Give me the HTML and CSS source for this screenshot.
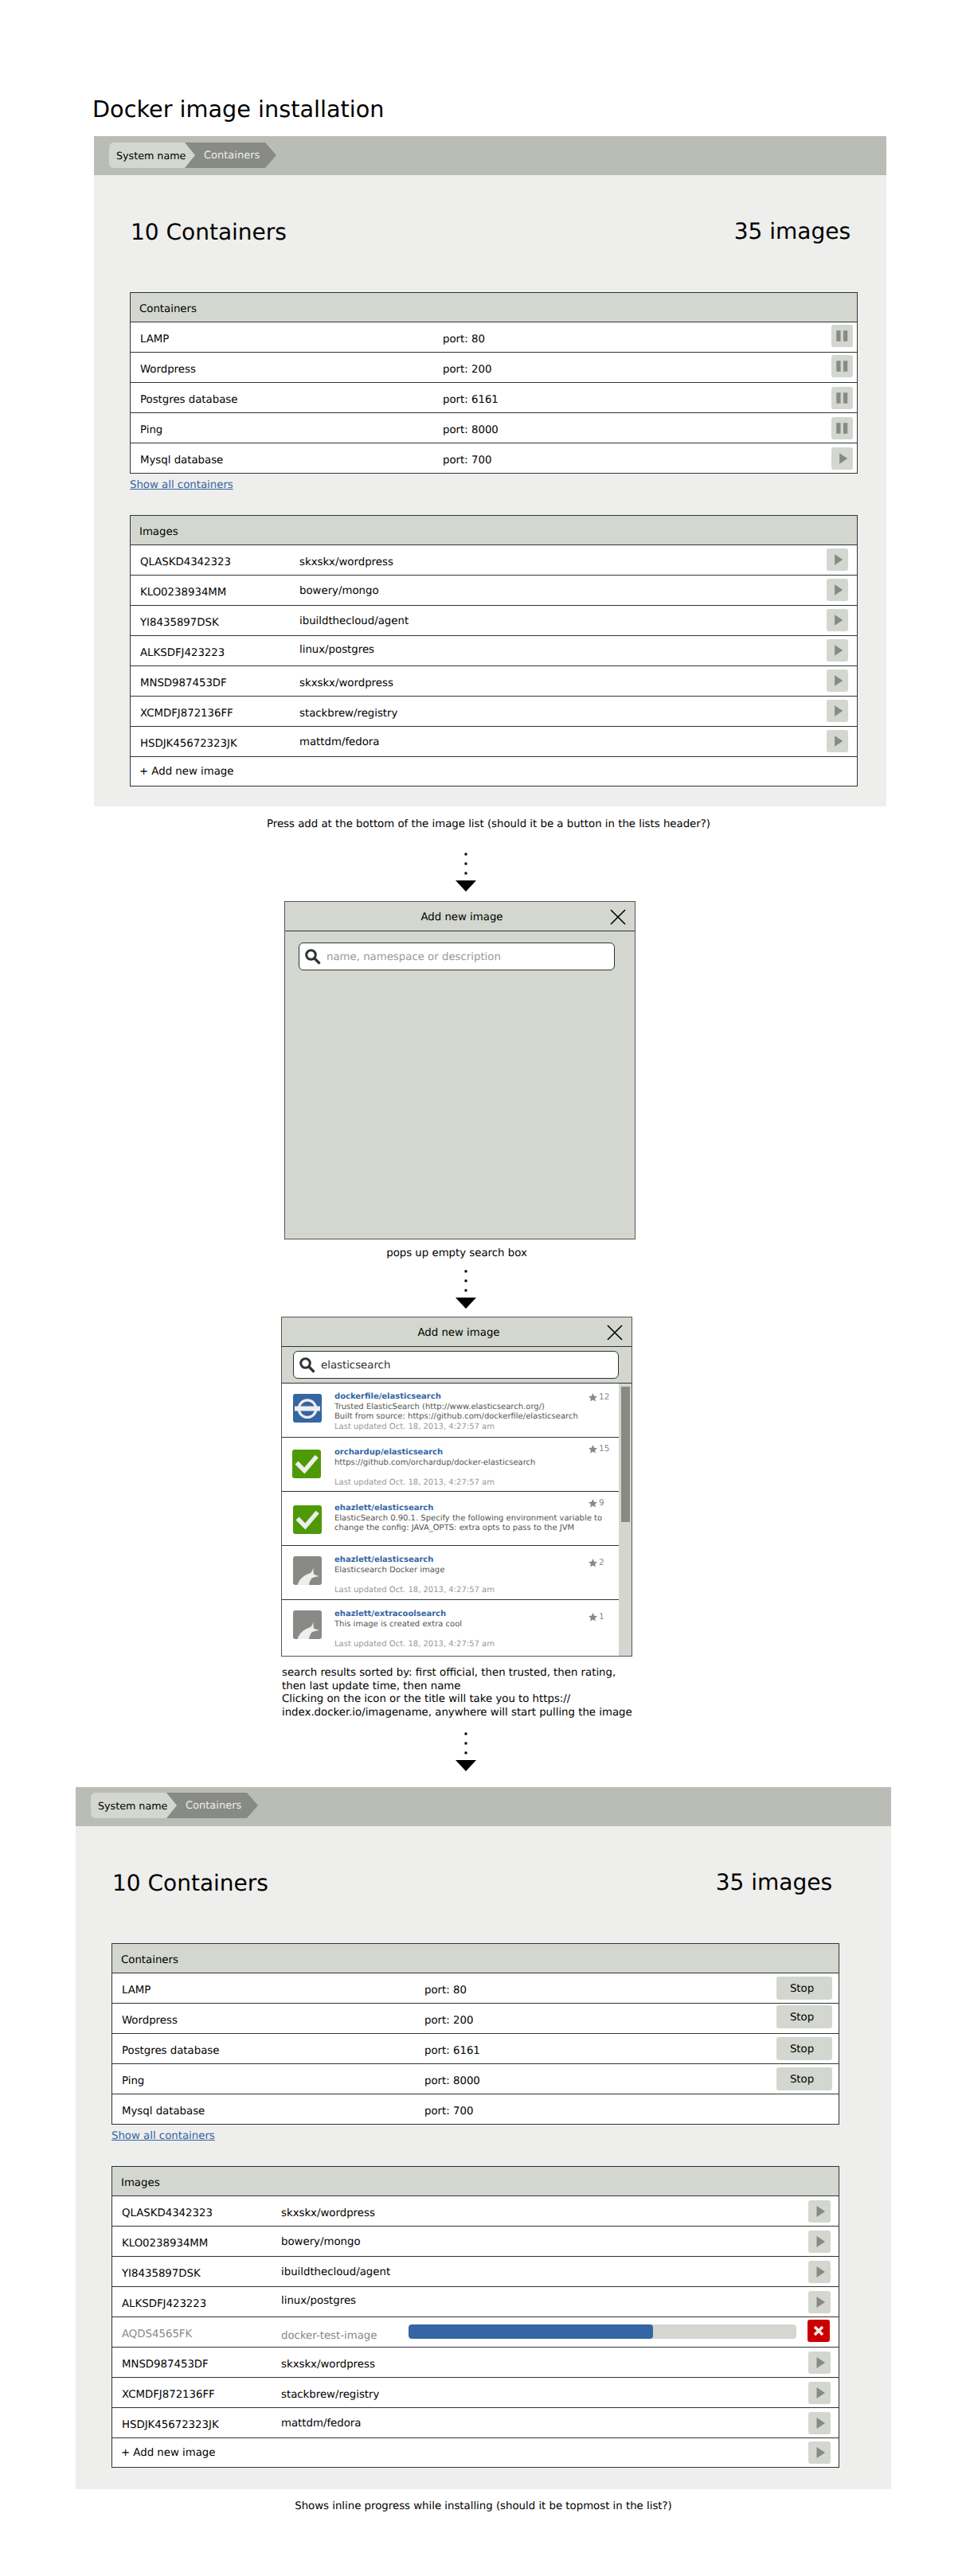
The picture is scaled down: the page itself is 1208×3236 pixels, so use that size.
FILE: index.html
```html
<!DOCTYPE html>
<html lang="en">
<head>
<meta charset="utf-8">
<title>Docker image installation</title>
<link rel="stylesheet" href="styles.css">
</head>
<body>
<svg class="defs" width="0" height="0" aria-hidden="true">
  <defs>
    <symbol id="flow-arrow" viewBox="0 0 28 50">
      <rect x="12.5" y="1.5" width="3" height="3" fill="#000"/>
      <rect x="12.5" y="13.5" width="3" height="3" fill="#000"/>
      <rect x="12.5" y="25.5" width="3" height="3" fill="#000"/>
      <path d="M1 36H27L14 50Z" fill="#000"/>
    </symbol>
    <symbol id="i-play" viewBox="0 0 28 28"><path d="M10.5 7V21L21 14Z" fill="#888a85"/></symbol>
    <symbol id="i-pause" viewBox="0 0 28 28"><rect x="6.5" y="7" width="5.5" height="14" fill="#888a85"/><rect x="15.5" y="7" width="5.5" height="14" fill="#888a85"/></symbol>
    <symbol id="i-close" viewBox="0 0 20 20"><path d="M1 1L19 19M19 1L1 19" stroke="#000" stroke-width="1.6" fill="none"/></symbol>
    <symbol id="i-search" viewBox="0 0 20 20"><circle cx="7.5" cy="7.5" r="5.8" stroke="#2e3436" stroke-width="3" fill="none"/><path d="M11.5 11.5L18.5 18.5" stroke="#2e3436" stroke-width="3.2" fill="none"/></symbol>
    <symbol id="i-star" viewBox="0 0 24 24"><path d="M12 0l3.6 8 8.4.9-6.3 5.7 1.8 8.4L12 18.7 4.5 23l1.8-8.4L0 8.9 8.4 8z" fill="#888a85"/></symbol>
    <symbol id="i-official" viewBox="0 0 36 36"><rect width="36" height="36" rx="3" fill="#3465a4"/><circle cx="18" cy="18.7" r="10.8" stroke="#eeeeec" stroke-width="3.2" fill="none"/><rect x="2" y="15.5" width="32" height="6" fill="#eeeeec"/></symbol>
    <symbol id="i-trusted" viewBox="0 0 36 36"><rect width="36" height="36" rx="3" fill="#4e9a06"/><path d="M5.5 16.5L15.3 26.5L30.7 8.5" stroke="#eeeeec" stroke-width="5.5" fill="none"/></symbol>
    <symbol id="i-whale" viewBox="0 0 36 36"><rect width="36" height="36" rx="3" fill="#888a85"/><path d="M5.5 36C8 28 15 23 22 21C24 19 25 16 25.5 14.5C25.5 18 25.5 21 26 22.5C28 23.5 31 24.5 33 25C29 25.5 26 26.5 23.5 27.5C21.5 30 20.5 33 20 36Z" fill="#eeeeec"/></symbol>
  </defs>
</svg>

<h1 class="page-title">Docker image installation</h1>

<section class="panel panel-a">
  <div class="bar">
    <div class="crumbs"><span class="crumb crumb-root">System name</span><span class="crumb crumb-leaf">Containers</span></div>
  </div>
  <div class="content">
    <div class="stats"><span>10 Containers</span><span class="stats-right">35 images</span></div>
    <div class="table">
      <div class="table-head">Containers</div>
      <div class="row row-port"><span class="cell">LAMP</span><span class="cell">port: 80</span><span class="btn btn-icon btn-pc"><svg class="btn-glyph"><use href="#i-pause"/></svg></span></div>
      <div class="row row-port"><span class="cell">Wordpress</span><span class="cell">port: 200</span><span class="btn btn-icon btn-pc"><svg class="btn-glyph"><use href="#i-pause"/></svg></span></div>
      <div class="row row-port"><span class="cell">Postgres database</span><span class="cell">port: 6161</span><span class="btn btn-icon btn-pc btn-low"><svg class="btn-glyph"><use href="#i-pause"/></svg></span></div>
      <div class="row row-port"><span class="cell">Ping</span><span class="cell">port: 8000</span><span class="btn btn-icon btn-pc btn-low"><svg class="btn-glyph"><use href="#i-pause"/></svg></span></div>
      <div class="row row-port"><span class="cell">Mysql database</span><span class="cell">port: 700</span><span class="btn btn-icon btn-pc btn-low"><svg class="btn-glyph"><use href="#i-play"/></svg></span></div>
    </div>
    <a class="more" href="#">Show all containers</a>
    <div class="table table-images">
      <div class="table-head">Images</div>
      <div class="row row-image"><span class="cell">QLASKD4342323</span><span class="cell">skxskx/wordpress</span><span class="btn btn-icon btn-wide"><svg class="btn-glyph"><use href="#i-play"/></svg></span></div>
      <div class="row row-image"><span class="cell">KLO0238934MM</span><span class="cell up-1">bowery/mongo</span><span class="btn btn-icon btn-wide"><svg class="btn-glyph"><use href="#i-play"/></svg></span></div>
      <div class="row row-image"><span class="cell">YI8435897DSK</span><span class="cell up-1">ibuildthecloud/agent</span><span class="btn btn-icon btn-wide"><svg class="btn-glyph"><use href="#i-play"/></svg></span></div>
      <div class="row row-image"><span class="cell">ALKSDFJ423223</span><span class="cell up-2">linux/postgres</span><span class="btn btn-icon btn-wide"><svg class="btn-glyph"><use href="#i-play"/></svg></span></div>
      <div class="row row-image"><span class="cell">MNSD987453DF</span><span class="cell">skxskx/wordpress</span><span class="btn btn-icon btn-wide"><svg class="btn-glyph"><use href="#i-play"/></svg></span></div>
      <div class="row row-image"><span class="cell">XCMDFJ872136FF</span><span class="cell">stackbrew/registry</span><span class="btn btn-icon btn-wide"><svg class="btn-glyph"><use href="#i-play"/></svg></span></div>
      <div class="row row-image"><span class="cell">HSDJK45672323JK</span><span class="cell up-1">mattdm/fedora</span><span class="btn btn-icon btn-wide"><svg class="btn-glyph"><use href="#i-play"/></svg></span></div>
      <div class="row row-add">+ Add new image</div>
    </div>
  </div>
</section>

<p class="caption caption-first">Press add at the bottom of the image list (should it be a button in the lists header?)</p>
<svg class="flow flow-first"><use href="#flow-arrow"/></svg>

<section class="modal modal-empty">
  <header class="modal-head"><span class="modal-title">Add new image</span><svg class="modal-close"><use href="#i-close"/></svg></header>
  <div class="modal-search">
    <div class="search search-empty"><svg class="search-icon"><use href="#i-search"/></svg><span class="placeholder">name, namespace or description</span></div>
  </div>
</section>

<p class="caption caption-popup">pops up empty search box</p>
<svg class="flow flow-second"><use href="#flow-arrow"/></svg>

<section class="modal modal-results">
  <header class="modal-head"><span class="modal-title">Add new image</span><svg class="modal-close"><use href="#i-close"/></svg></header>
  <div class="modal-search modal-search-tight">
    <div class="search search-full"><svg class="search-icon"><use href="#i-search"/></svg><span class="query">elasticsearch</span></div>
  </div>
  <div class="results">
    <div class="result-list">
      <article class="result r1">
        <svg class="result-icon"><use href="#i-official"/></svg>
        <div class="result-body">
          <a class="result-name" href="#">dockerfile/elasticsearch</a>
          <div class="result-line">Trusted ElasticSearch (http://www.elasticsearch.org/)</div>
          <div class="result-line">Built from source: https://github.com/dockerfile/elasticsearch</div>
          <div class="result-line result-date">Last updated Oct. 18, 2013, 4:27:57 am</div>
        </div>
        <div class="result-stars"><svg class="star"><use href="#i-star"/></svg>12</div>
      </article>
      <article class="result r2">
        <svg class="result-icon"><use href="#i-trusted"/></svg>
        <div class="result-body">
          <a class="result-name" href="#">orchardup/elasticsearch</a>
          <div class="result-line">https://github.com/orchardup/docker-elasticsearch</div>
          <div class="result-line"></div>
          <div class="result-line result-date">Last updated Oct. 18, 2013, 4:27:57 am</div>
        </div>
        <div class="result-stars"><svg class="star"><use href="#i-star"/></svg>15</div>
      </article>
      <article class="result r3">
        <svg class="result-icon"><use href="#i-trusted"/></svg>
        <div class="result-body">
          <a class="result-name" href="#">ehazlett/elasticsearch</a>
          <div class="result-line">ElasticSearch 0.90.1. Specify the following environment variable to</div>
          <div class="result-line">change the config: JAVA_OPTS: extra opts to pass to the JVM</div>
        </div>
        <div class="result-stars"><svg class="star"><use href="#i-star"/></svg>9</div>
      </article>
      <article class="result r4">
        <svg class="result-icon"><use href="#i-whale"/></svg>
        <div class="result-body">
          <a class="result-name" href="#">ehazlett/elasticsearch</a>
          <div class="result-line">Elasticsearch Docker image</div>
          <div class="result-line"></div>
          <div class="result-line result-date">Last updated Oct. 18, 2013, 4:27:57 am</div>
        </div>
        <div class="result-stars"><svg class="star"><use href="#i-star"/></svg>2</div>
      </article>
      <article class="result r5">
        <svg class="result-icon"><use href="#i-whale"/></svg>
        <div class="result-body">
          <a class="result-name" href="#">ehazlett/extracoolsearch</a>
          <div class="result-line">This image is created extra cool</div>
          <div class="result-line"></div>
          <div class="result-line result-date">Last updated Oct. 18, 2013, 4:27:57 am</div>
        </div>
        <div class="result-stars"><svg class="star"><use href="#i-star"/></svg>1</div>
      </article>
    </div>
    <div class="scrollbar"><div class="scrollbar-thumb"></div></div>
  </div>
</section>

<p class="note">search results sorted by: first official, then trusted, then rating,<br>then last update time, then name<br>Clicking on the icon or the title will take you to https://<br>index.docker.io/imagename, anywhere will start pulling the image</p>
<svg class="flow flow-third"><use href="#flow-arrow"/></svg>

<section class="panel panel-b">
  <div class="bar">
    <div class="crumbs"><span class="crumb crumb-root">System name</span><span class="crumb crumb-leaf">Containers</span></div>
  </div>
  <div class="content">
    <div class="stats"><span>10 Containers</span><span class="stats-right">35 images</span></div>
    <div class="table">
      <div class="table-head">Containers</div>
      <div class="row row-port"><span class="cell">LAMP</span><span class="cell">port: 80</span><span class="btn btn-stop">Stop</span></div>
      <div class="row row-port"><span class="cell">Wordpress</span><span class="cell">port: 200</span><span class="btn btn-stop btn-stop-high">Stop</span></div>
      <div class="row row-port"><span class="cell">Postgres database</span><span class="cell">port: 6161</span><span class="btn btn-stop">Stop</span></div>
      <div class="row row-port"><span class="cell">Ping</span><span class="cell">port: 8000</span><span class="btn btn-stop">Stop</span></div>
      <div class="row row-port"><span class="cell">Mysql database</span><span class="cell">port: 700</span></div>
    </div>
    <a class="more" href="#">Show all containers</a>
    <div class="table table-images">
      <div class="table-head">Images</div>
      <div class="row row-image"><span class="cell">QLASKD4342323</span><span class="cell">skxskx/wordpress</span><span class="btn btn-icon btn-wide-b"><svg class="btn-glyph"><use href="#i-play"/></svg></span></div>
      <div class="row row-image"><span class="cell">KLO0238934MM</span><span class="cell up-1">bowery/mongo</span><span class="btn btn-icon btn-wide-b"><svg class="btn-glyph"><use href="#i-play"/></svg></span></div>
      <div class="row row-image"><span class="cell">YI8435897DSK</span><span class="cell up-1">ibuildthecloud/agent</span><span class="btn btn-icon btn-wide-b"><svg class="btn-glyph"><use href="#i-play"/></svg></span></div>
      <div class="row row-image"><span class="cell">ALKSDFJ423223</span><span class="cell up-2">linux/postgres</span><span class="btn btn-icon btn-wide-b"><svg class="btn-glyph"><use href="#i-play"/></svg></span></div>
      <div class="row row-progress"><span class="cell cell-muted">AQDS4565FK</span><span class="cell cell-muted down-1">docker-test-image</span><div class="progress"><div class="progress-fill" style="width:63%"></div></div><span class="btn btn-cancel"><svg class="cancel-glyph" viewBox="0 0 14 14"><path d="M2 2L12 12M12 2L2 12" stroke="#eeeeec" stroke-width="3.4" fill="none"/></svg></span></div>
      <div class="row row-image"><span class="cell">MNSD987453DF</span><span class="cell">skxskx/wordpress</span><span class="btn btn-icon btn-wide-b"><svg class="btn-glyph"><use href="#i-play"/></svg></span></div>
      <div class="row row-image"><span class="cell">XCMDFJ872136FF</span><span class="cell">stackbrew/registry</span><span class="btn btn-icon btn-wide-b"><svg class="btn-glyph"><use href="#i-play"/></svg></span></div>
      <div class="row row-image"><span class="cell">HSDJK45672323JK</span><span class="cell up-1">mattdm/fedora</span><span class="btn btn-icon btn-wide-b"><svg class="btn-glyph"><use href="#i-play"/></svg></span></div>
      <div class="row row-add row-add-btn"><span>+ Add new image</span><span class="btn btn-icon btn-wide-b btn-add"><svg class="btn-glyph"><use href="#i-play"/></svg></span></div>
    </div>
  </div>
</section>

<p class="caption caption-last">Shows inline progress while installing (should it be topmost in the list?)</p>
</body>
</html>
```

FILE: styles.css
```css
* { box-sizing: border-box; }

html, body { background: #fff; }

body {
  margin: 0;
  font-family: "DejaVu Sans", sans-serif;
  font-size: 13.3px;
  line-height: 16px;
  color: #000;
  text-rendering: geometricPrecision;
}

.defs { display: block; height: 0; }

.page-title {
  margin: 120px 0 17px 116px;
  font-size: 28.7px;
  font-weight: 400;
  line-height: 34px;
}

/* Panels */
.panel { background: #eeeeec; }
.panel-a { width: 995px; height: 842px; margin-left: 118px; }
.panel-b { width: 1024px; height: 882px; margin-left: 95px; }

.bar {
  height: 49px;
  padding: 8px 0 0 19px;
  background: #babdb6;
}

.crumbs { display: flex; height: 32px; }

.crumb {
  display: flex;
  align-items: center;
  height: 32px;
  padding-top: 2px;
  font-size: 13px;
}

.crumb-root {
  position: relative;
  z-index: 1;
  width: 108px;
  padding-left: 9px;
  font-size: 12.7px;
  background: #d3d7cf;
  border-radius: 6px 0 0 6px;
  clip-path: polygon(0 0, 95px 0, 100% 50%, 95px 100%, 0 100%);
}

.crumb-leaf {
  width: 115px;
  margin-left: -13px;
  padding-left: 24px;
  background: #888a85;
  color: #eeeeec;
  clip-path: polygon(0 0, 101px 0, 100% 50%, 101px 100%, 0 100%);
}

.panel-b .bar { padding-left: 19px; padding-top: 7px; }

.content { width: 914px; margin-left: 45px; }

.stats {
  display: flex;
  justify-content: space-between;
  height: 147px;
  padding: 52px 9px 0 1px;
  font-size: 28px;
  line-height: 40px;
}

.stats-right { margin-top: -1px; }

/* Tables */
.table {
  border: 1px solid #2e3436;
  border-bottom: 0;
  background: #fff;
}

.table-images { margin-top: 29px; }

.table-head {
  height: 37px;
  padding: 13px 0 0 11px;
  background: #d3d7cf;
  border-bottom: 1px solid #2e3436;
}

.row {
  display: grid;
  height: 38px;
  align-items: center;
  padding-left: 12px;
  border-bottom: 1px solid #2e3436;
}

.row-port { grid-template-columns: 380px 1fr auto; }
.row-image { grid-template-columns: 200px 1fr auto; }
.row-progress { grid-template-columns: 200px 160px 1fr auto; }

.row-add {
  display: flex;
  height: 37px;
  padding: 2px 0 0 11px;
  border-bottom: 1px solid #2e3436;
}

.row-add-btn { justify-content: space-between; }

.cell { padding-top: 6px; }
.cell-muted { color: #888a85; }
.up-1 { padding-top: 3px; }
.up-2 { padding-top: 0; padding-bottom: 1px; }
.down-1 { padding-top: 10px; }

.more {
  display: block;
  margin-top: 7px;
  color: #3465a4;
  text-decoration: underline;
}

/* Buttons */
.btn {
  display: block;
  align-self: start;
  background: #d3d7cf;
  border-radius: 3px;
}

.btn-icon { width: 27px; height: 28px; }
.btn-pc { margin: 3px 5px 0 0; }
.btn-low { margin-top: 5px; }
.btn-wide { margin: 4px 11px 0 0; }
.btn-wide-b { margin: 5px 10px 0 0; width: 28px; }
.btn-add { margin-top: 2px; }
.btn-glyph { display: block; width: 100%; height: 100%; }

.btn-stop {
  width: 70px;
  height: 29px;
  margin: 4px 8px 0 0;
  padding: 8px 6px 0 0;
  text-align: center;
}

.btn-stop-high { margin-top: 2px; }

.btn-cancel {
  display: flex;
  align-items: center;
  justify-content: center;
  width: 28px;
  height: 28px;
  margin: 3px 11px 0 14px;
  background: #cc0000;
}

.cancel-glyph { width: 14px; height: 14px; }

.progress {
  height: 18px;
  margin-top: -1px;
  background: #d3d7cf;
  border-radius: 4px;
  overflow: hidden;
}

.progress-fill { height: 100%; background: #3465a4; border-radius: 4px; }

/* Captions and flow arrows */
.caption { margin: 0; text-align: center; }
.caption-first { width: 995px; margin: 15px 0 0 118px; padding-right: 4px; }
.caption-popup { width: 441px; margin: 10px 0 0 353px; }
.caption-last { width: 1024px; margin: 14px 0 0 95px; }

.flow { display: block; width: 28px; height: 50px; margin-left: 571px; }
.flow-first { margin-top: 26px; margin-bottom: 12px; }
.flow-second { margin-top: 11px; margin-bottom: 10px; }
.flow-third { margin-top: 15px; margin-bottom: 20px; }

.note {
  margin: 13px 0 0 354px;
  line-height: 16.5px;
  white-space: nowrap;
}

/* Modals */
.modal {
  width: 441px;
  background: #d3d7cf;
  border: 1px solid #555753;
}

.modal-empty { height: 425px; margin-left: 357px; }
.modal-results { height: 427px; margin-left: 353px; }

.modal-head {
  position: relative;
  height: 37px;
  padding-top: 12px;
  padding-left: 5px;
  text-align: center;
  border-bottom: 1px solid #2e3436;
}

.modal-title { display: block; }

.modal-close {
  position: absolute;
  top: 9px;
  right: 11px;
  width: 20px;
  height: 20px;
}

.modal-search { padding: 14px 0 0 17px; }
.modal-search-tight { height: 46px; padding: 5px 0 0 14px; border-bottom: 1px solid #2e3436; }

.search {
  display: flex;
  align-items: center;
  height: 35px;
  background: #fff;
  border: 1px solid #2e3436;
  border-radius: 6px;
}

.search-empty { width: 397px; padding-left: 7px; }
.search-full { width: 409px; padding-left: 7px; }
.search-icon { width: 20px; height: 20px; flex: none; }
.placeholder { margin: 2px 0 0 7px; color: #999; }
.query { margin: 2px 0 0 7px; color: #2e3436; }

/* Results */
.results {
  display: flex;
  height: 342px;
  background: #d3d7cf;
}

.result-list { width: 423px; background: #fff; }

.result {
  position: relative;
  display: flex;
  height: 68px;
  padding-left: 14px;
  font-size: 10px;
  line-height: 12.5px;
  border-bottom: 1px solid #2e3436;
}

.result:last-child { height: 70px; border-bottom: 0; }

.r1 { --icon-top: 13px; --text-top: 11px; --star-top: 11px; }
.r2 { --icon-top: 15px; --text-top: 13px; --star-top: 8px; padding-left: 13px; }
.r3 { --icon-top: 17px; --text-top: 15px; --star-top: 8px; }
.r4 { --icon-top: 13px; --text-top: 12px; --star-top: 15px; }
.r5 { --icon-top: 13px; --text-top: 12px; --star-top: 15px; }

.result-icon {
  flex: none;
  width: 36px;
  height: 36px;
  margin-top: var(--icon-top);
}

.result-body {
  margin-left: 16px;
  padding-top: var(--text-top);
  white-space: nowrap;
}

.r2 .result-body { margin-left: 17px; }

.result-name {
  display: block;
  height: 12.5px;
  color: #3465a4;
  font-weight: 700;
  text-decoration: none;
}

.result-line { height: 12.5px; color: #555753; }
.result-date { color: #999; }

.result-stars {
  position: absolute;
  top: var(--star-top);
  left: 385px;
  display: flex;
  align-items: center;
  gap: 2px;
  font-size: 10.5px;
  color: #888a85;
}

.star { width: 11px; height: 11px; flex: none; }

.scrollbar { flex: 1; padding: 4px 2px 0 3px; }

.scrollbar-thumb { height: 170px; background: #888a85; }
```
